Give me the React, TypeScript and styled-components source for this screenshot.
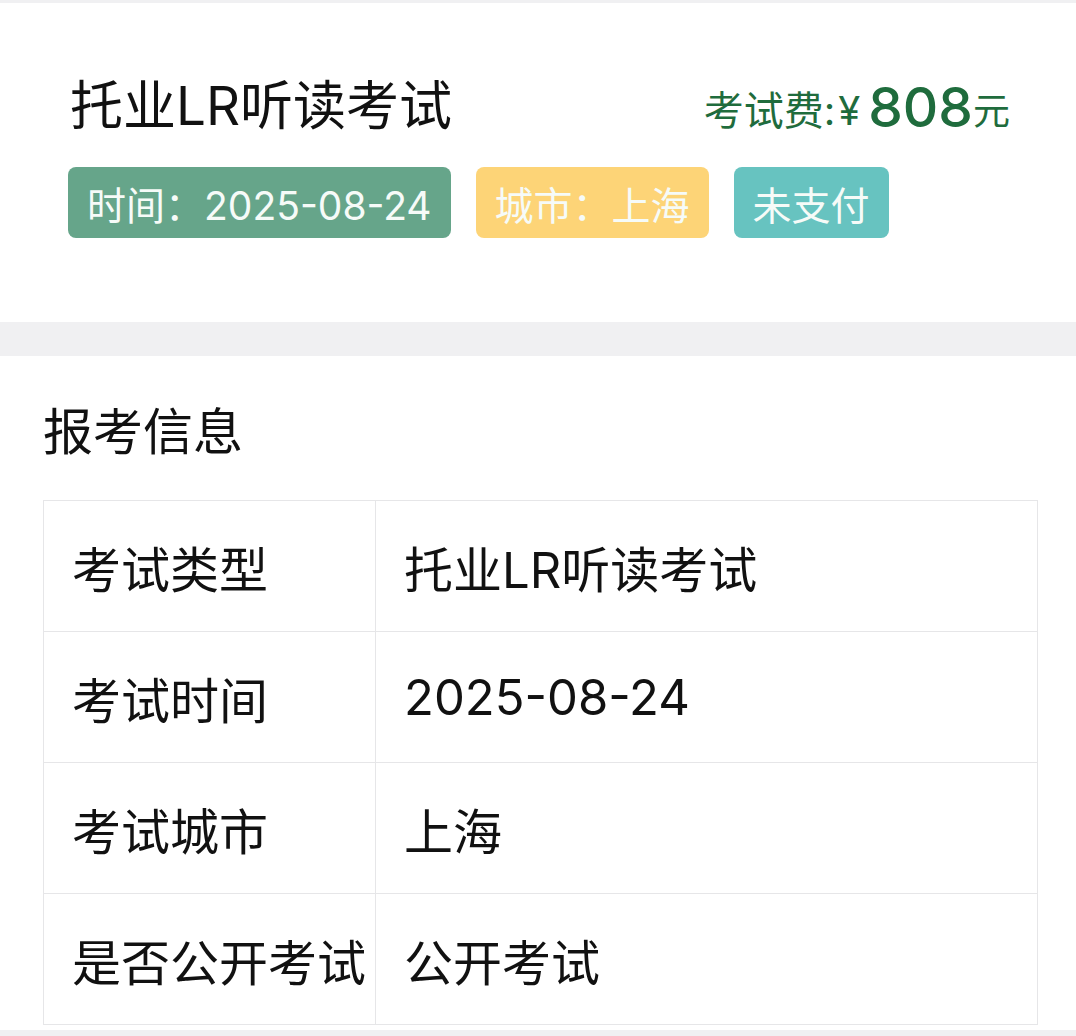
import React from 'react';
import styled, { createGlobalStyle } from 'styled-components';

const GlobalStyle = createGlobalStyle`
  html, body {
    margin: 0;
    padding: 0;
    background: #f0f0f2;
  }
  body {
    font-family: Inter, "Noto Sans CJK SC", sans-serif;
    color: #111;
  }
`;

const Page = styled.div`
  padding-top: 3px;
  width: 1076px;
`;

const HeaderCard = styled.section`
  background: #fff;
  padding: 69px 66px 84px 68px;
  margin-bottom: 34px;
`;

const HeaderRow = styled.div`
  display: flex;
  justify-content: space-between;
  align-items: baseline;
  padding-left: 2px;
`;

const Title = styled.h1`
  margin: 0;
  font-size: 53px;
  font-weight: 400;
  line-height: 62px;
`;

const Fee = styled.div`
  color: #1f6c3d;
  font-size: 40px;
  white-space: nowrap;
`;

const Yen = styled.span`
  margin: 0 8px 0 3px;
`;

const Amount = styled.span`
  font-size: 55px;
  font-weight: 500;
  position: relative;
  top: 2px;
`;

const Unit = styled.span`
  font-size: 37px;
`;

const Tags = styled.div`
  display: flex;
  gap: 25px;
  margin-top: 29px;
`;

const Tag = styled.span<{ $bg: string }>`
  display: inline-flex;
  align-items: center;
  height: 71px;
  padding: 0 19px;
  border-radius: 8px;
  background: ${(p) => p.$bg};
  color: #f6fbf8;
  font-size: 39px;
`;

const InfoCard = styled.section`
  background: #fff;
  padding: 46px 38px 5px 43px;
`;

const SectionTitle = styled.h2`
  margin: 0 0 38px 0;
  font-size: 50px;
  font-weight: 400;
  line-height: 60px;
`;

const Table = styled.div`
  display: grid;
  grid-template-columns: 332px 1fr;
  border-top: 1.5px solid #e6e6e8;
  border-left: 1.5px solid #e6e6e8;
`;

const Cell = styled.div`
  display: flex;
  align-items: center;
  height: 130px;
  padding-left: 28px;
  border-right: 1.5px solid #e6e6e8;
  border-bottom: 1.5px solid #e6e6e8;
  font-size: 49px;
  white-space: nowrap;
`;

const rows = [
  ['考试类型', '托业LR听读考试'],
  ['考试时间', '2025-08-24'],
  ['考试城市', '上海'],
  ['是否公开考试', '公开考试'],
];

const App = () => {
  return (
    <Page>
      <GlobalStyle />
      <HeaderCard>
        <HeaderRow>
          <Title>托业LR听读考试</Title>
          <Fee>
            考试费:<Yen>¥</Yen><Amount>808</Amount><Unit>元</Unit>
          </Fee>
        </HeaderRow>
        <Tags>
          <Tag $bg="#66a58a">时间：2025-08-24</Tag>
          <Tag $bg="#fdd477">城市：上海</Tag>
          <Tag $bg="#67c3c0">未支付</Tag>
        </Tags>
      </HeaderCard>
      <InfoCard>
        <SectionTitle>报考信息</SectionTitle>
        <Table>
          {rows.map(([label, value]) => (
            <React.Fragment key={label}>
              <Cell>{label}</Cell>
              <Cell>{value}</Cell>
            </React.Fragment>
          ))}
        </Table>
      </InfoCard>
    </Page>
  );
};

export default App;
